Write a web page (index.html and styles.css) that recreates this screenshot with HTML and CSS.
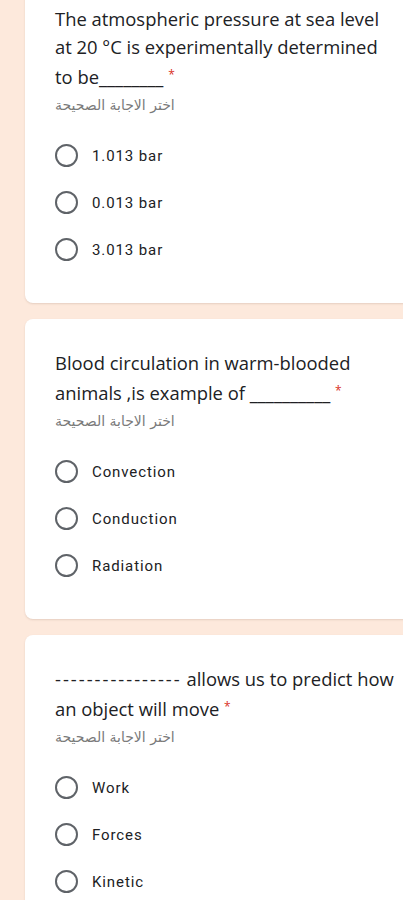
FILE: index.html
```html
<!DOCTYPE html>
<html>
<head>
<meta charset="utf-8">
<link rel="stylesheet" href="styles.css">
</head>
<body>
<div class="page">
  <div class="card first">
    <div class="question">The atmospheric pressure at sea level at 20 °C is experimentally determined to be________ <span class="req">*</span></div>
    <div class="hint"><span dir="rtl">اختر الاجابة الصحيحة</span></div>
    <div class="options">
      <div class="option"><span class="radio"></span><span class="label">1.013 bar</span></div>
      <div class="option"><span class="radio"></span><span class="label">0.013 bar</span></div>
      <div class="option"><span class="radio"></span><span class="label">3.013 bar</span></div>
    </div>
  </div>
  <div class="card">
    <div class="question">Blood circulation in warm-blooded animals ,is example of __________ <span class="req">*</span></div>
    <div class="hint"><span dir="rtl">اختر الاجابة الصحيحة</span></div>
    <div class="options">
      <div class="option"><span class="radio"></span><span class="label">Convection</span></div>
      <div class="option"><span class="radio"></span><span class="label">Conduction</span></div>
      <div class="option"><span class="radio"></span><span class="label">Radiation</span></div>
    </div>
  </div>
  <div class="card">
    <div class="question"><span class="dashes">----------------</span> allows us to predict how an object will move <span class="req">*</span></div>
    <div class="hint"><span dir="rtl">اختر الاجابة الصحيحة</span></div>
    <div class="options">
      <div class="option"><span class="radio"></span><span class="label">Work</span></div>
      <div class="option"><span class="radio"></span><span class="label">Forces</span></div>
      <div class="option"><span class="radio"></span><span class="label">Kinetic</span></div>
    </div>
  </div>
</div>
</body>
</html>
```
FILE: styles.css
```css
html, body {
  margin: 0;
  padding: 0;
  background: #fde9dc;
  overflow: hidden;
}
.page {
  display: flex;
  flex-direction: column;
  gap: 16px;
  padding-left: 25px;
  margin-top: -25px;
  width: 420px;
}
.card {
  background: #fff;
  border-radius: 8px;
  padding: 30px 30px 30px 30px;
  box-shadow: 0 1px 2px rgba(120, 90, 70, 0.18);
  width: 360px;
}
.question {
  font-family: "Open Sans", sans-serif;
  font-size: 18.4px;
  line-height: 28px;
  color: #202124;
  width: 342px;
}
.dashes {
  letter-spacing: 2px;
}
.req {
  color: #d93025;
  font-size: 12px;
  vertical-align: 5px;
}
.hint {
  margin-top: 4px;
  line-height: 20px;
  font-family: "DejaVu Sans", sans-serif;
  font-size: 14px;
  color: #7a7a7a;
}
.hint span {
  display: inline-block;
}
.options {
  margin-top: 17px;
  display: flex;
  flex-direction: column;
}
.option {
  height: 47px;
  display: flex;
  align-items: center;
  gap: 14px;
}
.radio {
  width: 19px;
  height: 19px;
  border: 2px solid #5f6368;
  border-radius: 50%;
  flex: none;
}
.label {
  font-family: Roboto, sans-serif;
  font-size: 15px;
  letter-spacing: 0.9px;
  color: #202124;
}
```
